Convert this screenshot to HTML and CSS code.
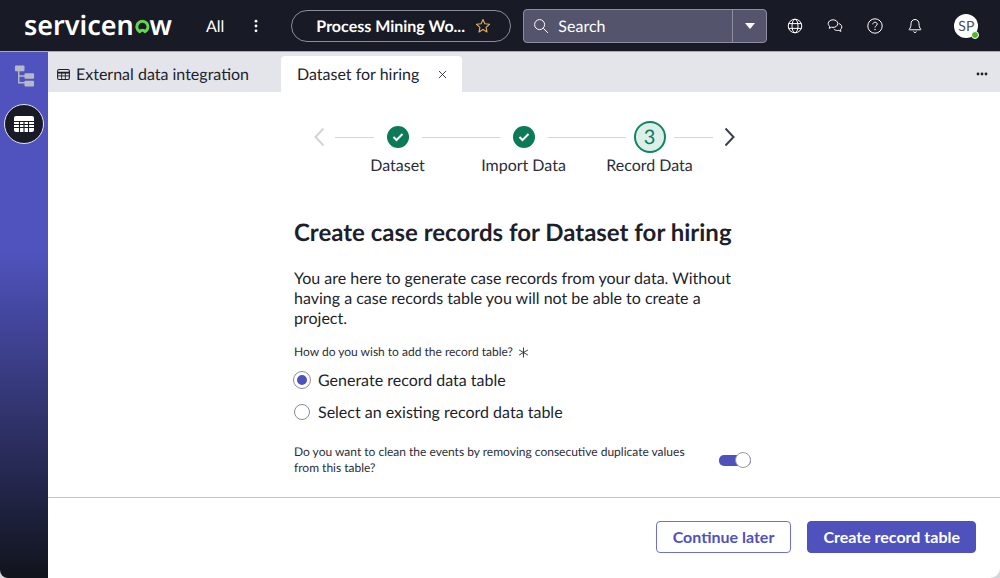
FILE: index.html
```html
<!DOCTYPE html>
<html lang="en">
<head>
    <meta charset="UTF-8">
    <meta name="viewport" content="width=device-width, initial-scale=1.0">
    <title>Dataset for hiring</title>
    <link rel="stylesheet" href="styles.css">
</head>
<body>

    <header class="top-bar">
        <div class="logo">servicen<svg class="logo-o" viewBox="0 0 16 16" width="17" height="17"><path d="M5.200 13.600A6 6 0 1 1 10.800 13.600 3.400 3.400 0 0 0 5.200 13.600Z" fill="none" stroke="#62d84e" stroke-width="3.200" stroke-linejoin="round"/></svg>w</div>
        <span class="all-link">All</span>
        <svg class="more-dots" viewBox="0 0 4 16" width="4" height="14"><circle cx="2" cy="2.500" r="1.600"/><circle cx="2" cy="8" r="1.600"/><circle cx="2" cy="13.500" r="1.600"/></svg>
        <div class="context-pill">
            <span>Process Mining Wo...</span>
            <svg viewBox="0 0 16 16" width="16" height="16"><path d="M8 1.600l1.900 4.200 4.600.5-3.400 3.100.9 4.500L8 11.600l-4 2.300.9-4.500L1.500 6.300l4.600-.5z" fill="none" stroke="#e3b35c" stroke-width="1.100" stroke-linejoin="round"/></svg>
        </div>
        <div class="search-box">
            <div class="search-main">
                <svg viewBox="0 0 16 16" width="16" height="16"><circle cx="6.600" cy="6.600" r="5" fill="none" stroke="#fff" stroke-width="1"/><path d="M10.300 10.300l4.600 4.600" stroke="#fff" stroke-width="1"/></svg>
                <span>Search</span>
            </div>
            <div class="search-caret"><i></i></div>
        </div>
        <div class="top-icons">
            <svg viewBox="0 0 16 16" width="16" height="16"><g fill="none" stroke="#fff" stroke-width="1"><circle cx="8" cy="8" r="6.800"/><ellipse cx="8" cy="8" rx="3" ry="6.800"/><path d="M1.600 5.600h12.800M1.600 10.400h12.800"/></g></svg>
            <svg viewBox="0 0 16 16" width="16" height="16"><g fill="none" stroke="#fff" stroke-width="1" stroke-linejoin="round"><path d="M6 1.800c-2.700 0-4.800 1.700-4.800 3.800 0 1.100.6 2.100 1.500 2.800l-.5 2 2.200-1.200c.5.100 1 .2 1.600.2 2.700 0 4.800-1.700 4.800-3.800S8.700 1.800 6 1.800Z"/><path d="M11.800 5.600c1.700.4 3 1.700 3 3.300 0 1-.5 1.900-1.300 2.500l.4 2-2.100-1.100c-.4.100-.9.200-1.400.2-1.500 0-2.800-.6-3.600-1.600"/></g></svg>
            <svg viewBox="0 0 16 16" width="16" height="16"><circle cx="8" cy="8" r="7.200" fill="none" stroke="#fff" stroke-width="1"/><path d="M5.900 6.300c0-1.300 1-2.100 2.200-2.100 1.200 0 2.100.8 2.100 1.900 0 1.700-2.200 1.700-2.200 3.400" fill="none" stroke="#fff" stroke-width="1"/><circle cx="8" cy="11.500" r=".7" fill="#fff"/></svg>
            <svg viewBox="0 0 16 16" width="16" height="16"><path d="M8 1.500c-2.600 0-4 2-4 4.300 0 2.500-.5 4-1.800 5.400-.2.300 0 .6.300.6h11c.3 0 .5-.3.300-.6C12.500 9.800 12 8.300 12 5.800c0-2.300-1.400-4.300-4-4.300Z" fill="none" stroke="#fff" stroke-width="1"/><path d="M6.500 13.500c.2.700.8 1 1.500 1s1.300-.3 1.500-1" fill="none" stroke="#fff" stroke-width="1"/></svg>
        </div>
        <div class="avatar">SP<span class="avatar-status"></span></div>
    </header>

    <div class="app-body">
        <nav class="side-rail">
            <svg class="rail-tree" viewBox="0 0 22 24" width="21" height="24"><path d="M5 6v13h7M5 12h7" fill="none" stroke="#b7b8c8" stroke-width="1.500"/><rect x="1" y="1" width="10" height="6" rx="1" fill="#b7b8c8"/><rect x="11" y="9" width="10" height="6" rx="1" fill="#b7b8c8"/><rect x="11" y="17" width="10" height="6" rx="1" fill="#b7b8c8"/></svg>
            <div class="rail-active">
                <svg viewBox="0 0 20 16" width="20" height="16"><rect width="20" height="16" rx="2" fill="#fff"/><path d="M0 5.500h20M0 8.500h20M0 11.500h20M5.500 5.500V16M10 5.500V16M14.500 5.500V16" stroke="#181a26" stroke-width="1.100"/></svg>
            </div>
        </nav>

        <main class="workspace">
            <div class="tab-bar">
                <div class="tab">
                    <svg viewBox="0 0 14 12" width="13" height="11"><rect x=".6" y=".6" width="12.800" height="10.800" rx="1.500" fill="none" stroke="#1d1f2b" stroke-width="1.200"/><path d="M.6 4h12.800" stroke="#1d1f2b" stroke-width="2"/><path d="M.6 7.500h12.800M5 4v7M9 4v7" stroke="#1d1f2b" stroke-width="1"/></svg>
                    External data integration
                </div>
                <div class="tab tab-active">
                    Dataset for hiring
                    <svg viewBox="0 0 10 10" width="9" height="9"><path d="M1 1l8 8M9 1l-8 8" stroke="#2b2e3a" stroke-width="1"/></svg>
                </div>
                <svg class="tab-more" viewBox="0 0 12 4" width="12" height="4"><circle cx="2" cy="2" r="1.400"/><circle cx="6" cy="2" r="1.400"/><circle cx="10" cy="2" r="1.400"/></svg>
            </div>

            <div class="stepper">
                <svg class="step-arrow" viewBox="0 0 10 20" width="10" height="20"><path d="M9.500 1.500L1.500 10l8 8.500" fill="none" stroke="#d3d4d8" stroke-width="2"/></svg>
                <span class="step-line short first"></span>
                <div class="step">
                    <span class="step-mark done"><svg viewBox="0 0 12 10" width="12" height="10"><path d="M1.500 5l3 3 6-6" fill="none" stroke="#fff" stroke-width="2"/></svg></span>
                    <span class="step-label">Dataset</span>
                </div>
                <span class="step-line"></span>
                <div class="step">
                    <span class="step-mark done"><svg viewBox="0 0 12 10" width="12" height="10"><path d="M1.500 5l3 3 6-6" fill="none" stroke="#fff" stroke-width="2"/></svg></span>
                    <span class="step-label">Import Data</span>
                </div>
                <span class="step-line"></span>
                <div class="step">
                    <span class="step-mark current">3</span>
                    <span class="step-label">Record Data</span>
                </div>
                <span class="step-line short last"></span>
                <svg class="step-arrow" viewBox="0 0 10 20" width="10" height="20"><path d="M.5 1.500L8.500 10l-8 8.500" fill="none" stroke="#3b3f50" stroke-width="2"/></svg>
            </div>

            <section class="form-body">
                <h1>Create case records for Dataset for hiring</h1>
                <p class="intro">You are here to generate case records from your data. Without having a case records table you will not be able to create a project.</p>
                <div class="field-label">How do you wish to add the record table? <svg viewBox="0 0 12 12" width="11" height="11"><path d="M6 .5v11M1.200 3.200l9.600 5.600M10.800 3.200L1.200 8.800" stroke="#2b2e3a" stroke-width="1"/></svg></div>
                <label class="radio-row"><span class="radio checked"></span>Generate record data table</label>
                <label class="radio-row"><span class="radio"></span>Select an existing record data table</label>
                <div class="toggle-row">
                    <span>Do you want to clean the events by removing consecutive duplicate values from this table?</span>
                    <span class="toggle"><i></i></span>
                </div>
            </section>

            <footer class="action-bar">
                <button class="btn btn-outline">Continue later</button>
                <button class="btn btn-primary">Create record table</button>
            </footer>
        </main>
    </div>

</body>
</html>
```

FILE: styles.css
```css
* {
    box-sizing: border-box;
}

html, body {
    height: 100%;
}

body {
    margin: 0;
    overflow: hidden;
    display: flex;
    flex-direction: column;
    font-family: 'Lato', sans-serif;
    color: #1d1f2b;
    background-color: #d5d6dc;
    text-rendering: geometricPrecision;
}

.top-bar {
    height: 52px;
    flex: none;
    display: flex;
    align-items: center;
    padding-left: 24px;
    background-color: #181a26;
    border-bottom: 1px solid #a9aab2;
    color: #fff;
}

.logo {
    width: 148px;
    display: flex;
    align-items: center;
    padding-bottom: 3px;
    font-family: 'Noto Sans', sans-serif;
    font-size: 27px;
    font-weight: 600;
}

.logo-o {
    margin: 4px 0 0 1px;
}

.all-link {
    margin-left: 34px;
    padding-top: 1px;
    font-size: 16px;
}

.more-dots {
    margin-left: 30px;
    fill: #fff;
}

.context-pill {
    width: 220px;
    height: 32px;
    margin-left: 33px;
    padding: 1px 0 0 24px;
    display: flex;
    align-items: center;
    gap: 10px;
    border: 1px solid #8b8c96;
    border-radius: 16px;
    font-size: 16px;
    font-weight: 700;
}

.search-box {
    width: 244px;
    height: 34px;
    margin-left: 12px;
    display: flex;
    background-color: #55546d;
    border: 1px solid #8e8ea0;
    border-radius: 4px;
}

.search-main {
    flex: 1;
    display: flex;
    align-items: center;
    gap: 9px;
    padding: 1px 0 0 9px;
    font-size: 16px;
    border-right: 1px solid #8e8ea0;
}

.search-caret {
    width: 33px;
    display: flex;
    align-items: center;
    justify-content: center;
}

.search-caret i {
    border-left: 5px solid transparent;
    border-right: 5px solid transparent;
    border-top: 6px solid #fff;
}

.top-icons {
    margin-left: 20px;
    display: flex;
    gap: 24px;
}

.avatar {
    position: relative;
    width: 24px;
    height: 24px;
    margin-left: 31px;
    display: flex;
    align-items: center;
    justify-content: center;
    border-radius: 50%;
    background-color: #fff;
    color: #4c4f5e;
    font-size: 14px;
}

.avatar-status {
    position: absolute;
    right: -1px;
    bottom: -1px;
    width: 8px;
    height: 8px;
    border-radius: 50%;
    background-color: #52b52c;
    border: 1px solid #fff;
}

.app-body {
    flex: 1;
    min-height: 0;
    display: flex;
}

.side-rail {
    width: 48px;
    flex: none;
    display: flex;
    flex-direction: column;
    align-items: center;
    padding-top: 12px;
    background: linear-gradient(#5053bd 38%, #11141c 100%);
    border-bottom-left-radius: 8px;
}

.rail-tree {
    margin-left: 1px;
}

.rail-active {
    width: 40px;
    height: 40px;
    margin-top: 16px;
    display: flex;
    align-items: center;
    justify-content: center;
    border-radius: 50%;
    background-color: #181a26;
    border: 1px solid #e4e5ea;
}

.workspace {
    flex: 1;
    min-width: 0;
    display: flex;
    flex-direction: column;
    background-color: #fff;
    border-bottom-right-radius: 10px;
}

.tab-bar {
    height: 40px;
    flex: none;
    display: flex;
    align-items: flex-end;
    background-color: #e4e5ea;
    font-size: 16px;
}

.tab {
    height: 36px;
    width: 233px;
    padding-left: 9px;
    display: flex;
    align-items: center;
    gap: 6px;
}

.tab-active {
    width: 181px;
    padding: 0 15px 0 16px;
    justify-content: space-between;
    background-color: #fff;
    border-radius: 4px 4px 0 0;
}

.tab-more {
    margin: 0 12px 16px auto;
    fill: #1d1f2b;
}

.stepper {
    height: 117px;
    flex: none;
    display: flex;
    justify-content: center;
    padding-top: 29px;
    align-items: flex-start;
}

.step-arrow {
    margin-top: 6px;
}

.step-line {
    width: 78px;
    height: 1px;
    margin-top: 16px;
    background-color: #d3d4dc;
}

.step-line.short {
    width: 39px;
}

.step-line.first {
    margin-left: 11px;
}

.step-line.last {
    margin-right: 12px;
}

.step {
    width: 48px;
    display: flex;
    flex-direction: column;
    align-items: center;
    white-space: nowrap;
}

.step-mark {
    width: 22px;
    height: 22px;
    margin: 5px 0;
    display: flex;
    align-items: center;
    justify-content: center;
    border-radius: 50%;
}

.step-mark.done {
    background-color: #0b7a56;
}

.step-mark.current {
    width: 32px;
    height: 32px;
    margin: 0;
    background-color: #dcefe8;
    border: 2px solid #0f8562;
    color: #0f7a5a;
    font-size: 20px;
}

.step-label {
    margin-top: 3px;
    font-size: 16px;
    line-height: 20px;
    color: #2b2e3a;
}

.form-body {
    width: 458px;
    flex: 1;
    margin-left: 246px;
}

h1 {
    margin: 8px 0 0;
    padding-top: 1px;
    font-size: 24px;
    line-height: 30px;
    font-weight: 700;
}

.intro {
    margin: 21px 0 0;
    font-size: 16px;
    line-height: 20px;
}

.field-label {
    margin-top: 13px;
    display: flex;
    align-items: center;
    gap: 5px;
    font-size: 12px;
    line-height: 20px;
    color: #2b2e3a;
}

.radio-row {
    height: 32px;
    display: flex;
    align-items: center;
    gap: 8px;
    font-size: 16px;
}

.radio-row:first-of-type {
    margin-top: 2px;
}

.radio {
    width: 16px;
    height: 16px;
    border-radius: 50%;
    border: 1px solid #8a8c99;
    background-color: #fff;
}

.radio.checked {
    border: 3px solid #fff;
    outline: 1px solid #8a8c99;
    background-color: #4f52bd;
}

.toggle-row {
    margin-top: 16px;
    display: flex;
    align-items: center;
    justify-content: space-between;
    font-size: 12px;
    line-height: 16px;
    color: #2b2e3a;
}

.toggle-row span:first-child {
    width: 400px;
}

.toggle {
    position: relative;
    width: 32px;
    height: 11px;
    margin-right: 1px;
    border-radius: 5px;
    background-color: #4f52bd;
}

.toggle i {
    position: absolute;
    right: 0;
    top: -3px;
    width: 16px;
    height: 16px;
    border-radius: 50%;
    background-color: #fff;
    border: 1px solid #9a9ca8;
}

.action-bar {
    height: 81px;
    flex: none;
    display: flex;
    justify-content: flex-end;
    align-items: center;
    gap: 16px;
    padding: 0 24px 2px 0;
    border-top: 1px solid #c4c5cc;
}

.btn {
    height: 32px;
    padding: 0 16px 1px;
    border-radius: 4px;
    font-family: inherit;
    font-size: 16px;
    font-weight: 700;
    cursor: pointer;
}

.btn-outline {
    background-color: #fff;
    color: #4f52bd;
    border: 1px solid #6f72cc;
}

.btn-primary {
    padding: 0 15px 1px;
    background-color: #4f52bd;
    color: #fff;
    border: 1px solid #4f52bd;
}
```
